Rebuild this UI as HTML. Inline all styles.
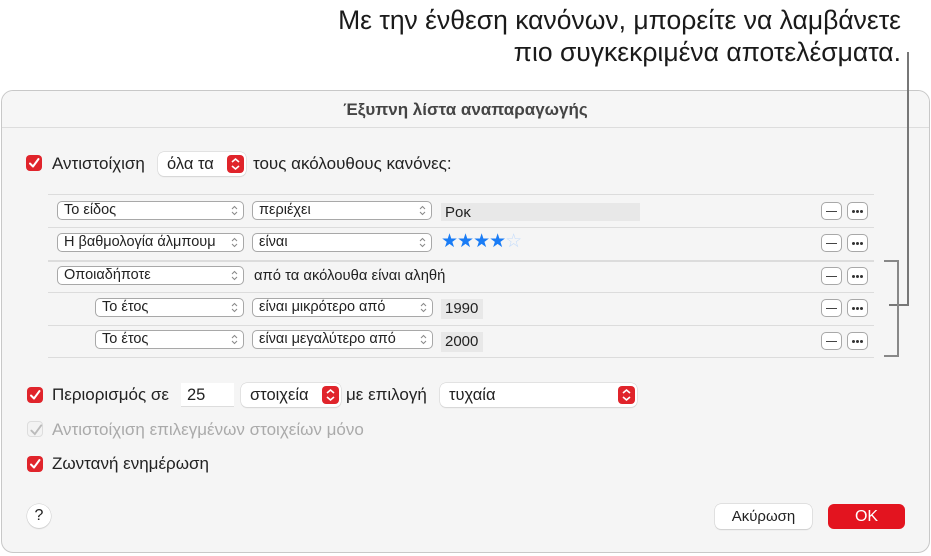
<!DOCTYPE html>
<html><head><meta charset="utf-8"><style>
*{box-sizing:border-box;margin:0;padding:0}
body{width:931px;height:556px;background:#fff;position:relative;overflow:hidden;font-family:"Liberation Sans","DejaVu Sans",sans-serif;color:#222;font-size:14px}
.a{position:absolute}
.callout{position:absolute;right:30px;top:4px;font-size:26.5px;line-height:32px;text-align:right;color:#1a1a1a;white-space:nowrap}
.dlg{position:absolute;left:1px;top:90px;width:929px;height:463px;background:#f5f5f5;border:1px solid #c8c8c8;border-radius:12px;overflow:hidden}
.title{position:absolute;left:0;top:0;width:100%;height:37px;border-bottom:1px solid #ddd;text-align:center;font-size:17px;line-height:37px;font-weight:bold;color:#444;background:#f6f6f6}
.cb{position:absolute;width:16px;height:16px;border-radius:4px;background:#e0242b;}
.cb svg{position:absolute;left:2px;top:2px}
.pop{position:absolute;height:19px;border:1px solid #a8a8a8;border-radius:5px;background:#fff;font-size:14.5px;line-height:17px;padding-left:6px;color:#222;white-space:nowrap;overflow:hidden}
.chev{position:absolute;right:5px;top:3px}
.fld{position:absolute;height:18px;background:#e8e8e8;font-size:15px;line-height:20px;padding-left:4px}
.sep{position:absolute;left:48px;width:826px;height:1px;background:#dcdcdc}
.btn{position:absolute;width:21px;height:18px;border:1px solid #a8a8a8;border-radius:5px;background:#fff}
.mn{position:absolute;left:4px;top:7.5px;width:11px;height:1.5px;background:#444}
.dt{position:absolute;left:4px;top:7px;width:3px;height:3px;border-radius:50%;background:#333;box-shadow:4px 0 0 #333,8px 0 0 #333}
.rp{position:absolute;height:24px;background:#fff;border-radius:6px;box-shadow:0 0 0 .5px #d0d0d0,0 1px 1px rgba(0,0,0,.12);font-size:16.5px;line-height:24px;padding-left:9px;white-space:nowrap}
.rs{position:absolute;right:2px;top:3px;width:17px;height:18px;background:#e0242b;border-radius:4px}
.t{position:absolute;font-size:17px;line-height:18px;white-space:nowrap}
</style></head><body>
<div class="callout">Με την ένθεση κανόνων, μπορείτε να λαμβάνετε<br>πιο συγκεκριμένα αποτελέσματα.</div>

<div class="dlg">
<div class="title">Έξυπνη λίστα αναπαραγωγής</div>
</div>

<div class="cb" style="left:26px;top:155px"><svg width="12" height="12" viewBox="0 0 12 12"><path d="M2 6.5 L5 9.5 L10.5 2" stroke="#fff" stroke-width="2" fill="none" stroke-linecap="round" stroke-linejoin="round"/></svg></div>
<div class="t" style="left:52px;top:155px">Αντιστοίχιση</div>
<div class="rp" style="left:158px;top:152px;width:88px">όλα τα<div class="rs"><svg width="17" height="18"><path d="M5 7l3.5-3 3.5 3M5 11l3.5 3 3.5-3" stroke="#fff" stroke-width="1.6" fill="none"/></svg></div></div>
<div class="t" style="left:253px;top:155px">τους ακόλουθους κανόνες:</div>

<div class="sep" style="top:194px"></div>
<div class="sep" style="top:227px"></div>
<div class="sep" style="top:260px;height:2px"></div>
<div class="sep" style="top:292px"></div>
<div class="sep" style="top:325px"></div>
<div class="sep" style="top:357px"></div>

<div class="pop" style="left:57px;top:201px;width:187px">Το είδος<svg class="chev" width="7" height="11"><path d="M1 4l2.5-2.5L6 4M1 7l2.5 2.5L6 7" stroke="#888" fill="none"/></svg></div>
<div class="pop" style="left:252px;top:201px;width:180px">περιέχει<svg class="chev" width="7" height="11"><path d="M1 4l2.5-2.5L6 4M1 7l2.5 2.5L6 7" stroke="#888" fill="none"/></svg></div>
<div class="fld" style="left:441px;top:203px;width:199px">Ροκ</div>
<div class="pop" style="left:57px;top:233px;width:187px">Η βαθμολογία άλμπουμ<svg class="chev" width="7" height="11"><path d="M1 4l2.5-2.5L6 4M1 7l2.5 2.5L6 7" stroke="#888" fill="none"/></svg></div>
<div class="pop" style="left:252px;top:233px;width:180px">είναι<svg class="chev" width="7" height="11"><path d="M1 4l2.5-2.5L6 4M1 7l2.5 2.5L6 7" stroke="#888" fill="none"/></svg></div>
<div class="t" style="left:441px;top:233px;font-size:19px;color:#1a7cf5;letter-spacing:-1px">★★★★<span style="color:#c4dcfb">☆</span></div>
<div class="pop" style="left:57px;top:266px;width:187px">Οποιαδήποτε<svg class="chev" width="7" height="11"><path d="M1 4l2.5-2.5L6 4M1 7l2.5 2.5L6 7" stroke="#888" fill="none"/></svg></div>
<div class="t" style="left:254px;top:267px;font-size:14.8px">από τα ακόλουθα είναι αληθή</div>
<div class="pop" style="left:95px;top:298px;width:149px">Το έτος<svg class="chev" width="7" height="11"><path d="M1 4l2.5-2.5L6 4M1 7l2.5 2.5L6 7" stroke="#888" fill="none"/></svg></div>
<div class="pop" style="left:252px;top:298px;width:181px">είναι μικρότερο από<svg class="chev" width="7" height="11"><path d="M1 4l2.5-2.5L6 4M1 7l2.5 2.5L6 7" stroke="#888" fill="none"/></svg></div>
<div class="fld" style="left:441px;top:299px;width:42px;height:20px">1990</div>
<div class="pop" style="left:95px;top:330px;width:149px">Το έτος<svg class="chev" width="7" height="11"><path d="M1 4l2.5-2.5L6 4M1 7l2.5 2.5L6 7" stroke="#888" fill="none"/></svg></div>
<div class="pop" style="left:252px;top:330px;width:181px">είναι μεγαλύτερο από<svg class="chev" width="7" height="11"><path d="M1 4l2.5-2.5L6 4M1 7l2.5 2.5L6 7" stroke="#888" fill="none"/></svg></div>
<div class="fld" style="left:441px;top:332px;width:42px;height:20px">2000</div>

<div class="btn" style="left:821px;top:202px"><div class="mn"></div></div>
<div class="btn" style="left:847px;top:202px"><div class="dt"></div></div>
<div class="btn" style="left:821px;top:234px"><div class="mn"></div></div>
<div class="btn" style="left:847px;top:234px"><div class="dt"></div></div>
<div class="btn" style="left:821px;top:267px"><div class="mn"></div></div>
<div class="btn" style="left:847px;top:267px"><div class="dt"></div></div>
<div class="btn" style="left:821px;top:299px"><div class="mn"></div></div>
<div class="btn" style="left:847px;top:299px"><div class="dt"></div></div>
<div class="btn" style="left:821px;top:332px"><div class="mn"></div></div>
<div class="btn" style="left:847px;top:332px"><div class="dt"></div></div>

<div class="a" style="left:907px;top:52px;width:2px;height:254px;background:#777"></div>
<div class="a" style="left:889px;top:304px;width:20px;height:2px;background:#777"></div>
<div class="a" style="left:884px;top:260px;width:15px;height:2px;background:#888"></div>
<div class="a" style="left:897px;top:260px;width:2px;height:97px;background:#888"></div>
<div class="a" style="left:884px;top:355px;width:15px;height:2px;background:#888"></div>

<div class="cb" style="left:27px;top:387px"><svg width="12" height="12" viewBox="0 0 12 12"><path d="M2 6.5 L5 9.5 L10.5 2" stroke="#fff" stroke-width="2" fill="none" stroke-linecap="round" stroke-linejoin="round"/></svg></div>
<div class="t" style="left:52px;top:386px">Περιορισμός σε</div>
<div class="a" style="left:181px;top:383px;width:53px;height:24px;background:#fff;border-bottom:1px solid #ddd;font-size:16.5px;line-height:24px;padding-left:6px">25</div>
<div class="rp" style="left:241px;top:383px;width:100px">στοιχεία<div class="rs"><svg width="17" height="18"><path d="M5 7l3.5-3 3.5 3M5 11l3.5 3 3.5-3" stroke="#fff" stroke-width="1.6" fill="none"/></svg></div></div>
<div class="t" style="left:346px;top:386px">με επιλογή</div>
<div class="rp" style="left:440px;top:383px;width:197px">τυχαία<div class="rs"><svg width="17" height="18"><path d="M5 7l3.5-3 3.5 3M5 11l3.5 3 3.5-3" stroke="#fff" stroke-width="1.6" fill="none"/></svg></div></div>

<div class="a" style="left:27px;top:421px;width:16px;height:16px;border-radius:4px;border:1px solid #ddd;background:#f3f3f3"><svg width="14" height="14" viewBox="0 0 12 12" style="position:absolute;left:1px;top:1px"><path d="M2 6.5 L5 9.5 L10.5 2" stroke="#bbb" stroke-width="1.6" fill="none" stroke-linecap="round"/></svg></div>
<div class="t" style="left:52px;top:421px;color:#aaa">Αντιστοίχιση επιλεγμένων στοιχείων μόνο</div>

<div class="cb" style="left:27px;top:456px"><svg width="12" height="12" viewBox="0 0 12 12"><path d="M2 6.5 L5 9.5 L10.5 2" stroke="#fff" stroke-width="2" fill="none" stroke-linecap="round" stroke-linejoin="round"/></svg></div>
<div class="t" style="left:52px;top:455px">Ζωντανή ενημέρωση</div>

<div class="a" style="left:27px;top:504px;width:24px;height:24px;border-radius:50%;background:#fff;box-shadow:0 0 0 .5px #ccc,0 1px 1px rgba(0,0,0,.15);text-align:center;font-size:16px;line-height:24px">?</div>
<div class="a" style="left:715px;top:504px;width:97px;height:25px;border-radius:6px;background:#fff;box-shadow:0 0 0 .5px #ccc,0 1px 1px rgba(0,0,0,.15);text-align:center;font-size:15px;line-height:25px">Ακύρωση</div>
<div class="a" style="left:828px;top:504px;width:77px;height:25px;border-radius:6px;background:#e3141f;color:#fff;text-align:center;font-size:16px;line-height:25px">OK</div>
</body></html>
